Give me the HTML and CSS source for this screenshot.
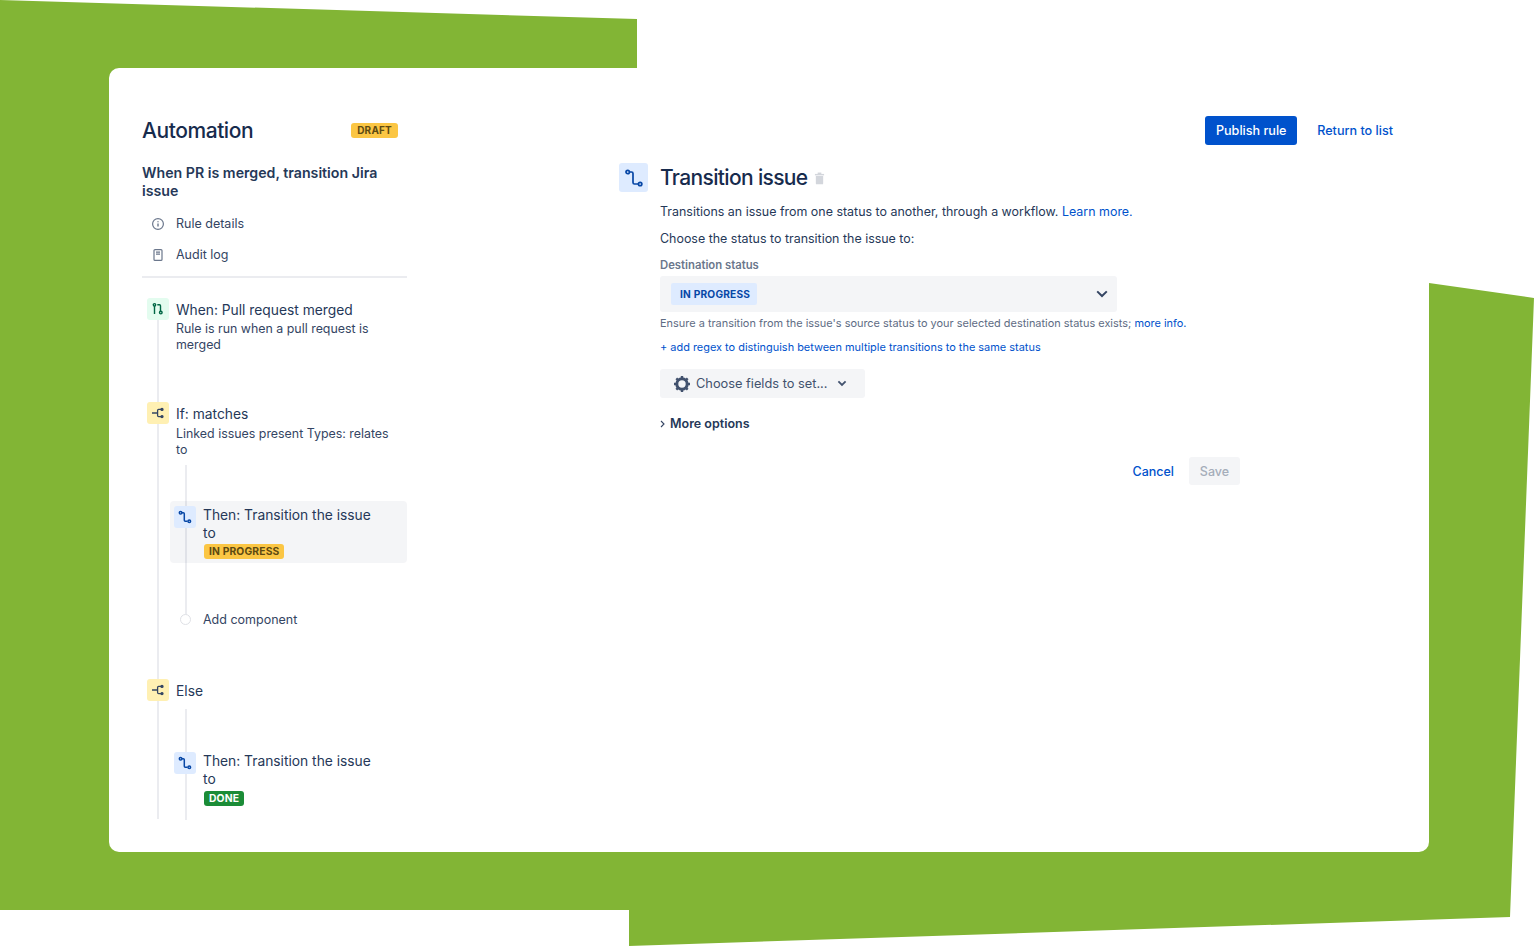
FILE: index.html
```html
<!DOCTYPE html>
<html lang="en">
<head>
  <meta charset="UTF-8">
  <title>Automation - Transition issue</title>
  <link rel="stylesheet" href="styles.css">
</head>
<body>

  <svg class="backdrop" width="1534" height="946" viewBox="0 0 1534 946">
    <polygon points="0,0 637,19 637,100 1429,100 1429,283 1534,298 1510,917 629,946 629,910 0,910" fill="#82b535"/>
  </svg>

  <div class="card">
    <aside class="sidebar">
      <div class="brand">
        <h1>Automation</h1>
        <span class="lozenge yellow draft">DRAFT</span>
      </div>
      <h2 class="rule-name">When PR is merged, transition Jira issue</h2>

      <div class="nav-item nav-first">
        <svg class="nav-icon" width="14" height="14" viewBox="0 0 14 14" fill="none" stroke="#6b778c" stroke-width="1.2">
          <circle cx="7" cy="7" r="5.4"/>
          <path d="M7 6.4v3.2M7 4.2v1" stroke-width="1.4"/>
        </svg>
        Rule details
      </div>
      <div class="nav-item">
        <svg class="nav-icon" width="14" height="14" viewBox="0 0 14 14" fill="none" stroke="#6b778c" stroke-width="1.2">
          <rect x="3" y="1.6" width="8" height="10.8" rx="1"/>
          <path d="M5 4.2h4M5 6.2h4"/>
        </svg>
        Audit log
      </div>
      <div class="divider"></div>

      <div class="tree">
        <div class="step">
          <span class="step-icon green">
            <svg width="14" height="14" viewBox="0 0 14 14" fill="none" stroke="#006644" stroke-width="1.4">
              <circle cx="3.5" cy="2.8" r="1.2"/>
              <path d="M3.5 4v8M6.3 2.8h2.2a1 1 0 0 1 1 1V9"/>
              <circle cx="9.8" cy="10.6" r="1.3"/>
            </svg>
          </span>
          <div class="step-text">
            <div class="step-title">When: Pull request merged</div>
            <div class="step-sub">Rule is run when a pull request is merged</div>
          </div>
        </div>

        <div class="step step-if">
          <span class="step-icon yellow-bg">
            <svg width="14" height="14" viewBox="0 0 14 14" fill="none" stroke="#344563" stroke-width="1.3">
              <path d="M1 7h5M10.5 3.4H7.6a1 1 0 0 0-1 1v5.2a1 1 0 0 0 1 1h2.9"/>
              <circle cx="11" cy="3.4" r="1" fill="#344563"/>
              <circle cx="11" cy="10.6" r="1" fill="#344563"/>
            </svg>
          </span>
          <div class="step-text">
            <div class="step-title">If: matches</div>
            <div class="step-sub">Linked issues present Types: relates to</div>
          </div>
        </div>

        <div class="branch branch-if">
          <div class="step inner selected">
            <span class="step-icon blue">
              <svg width="14" height="14" viewBox="0 0 14 14" fill="none" stroke="#0747a6" stroke-width="1.5">
                <circle cx="2.6" cy="2.8" r="1.3"/>
                <path d="M3.9 2.8h1.4a1 1 0 0 1 1 1v6.4a1 1 0 0 0 1 1h2.3"/>
                <circle cx="11.3" cy="11.2" r="1.3"/>
              </svg>
            </span>
            <div class="step-text">
              <div class="step-title">Then: Transition the issue to</div>
              <span class="lozenge yellow">IN PROGRESS</span>
            </div>
          </div>
          <div class="add-row">
            <span class="add-dot"></span>
            <span>Add component</span>
          </div>
        </div>

        <div class="step step-else">
          <span class="step-icon yellow-bg">
            <svg width="14" height="14" viewBox="0 0 14 14" fill="none" stroke="#344563" stroke-width="1.3">
              <path d="M1 7h5M10.5 3.4H7.6a1 1 0 0 0-1 1v5.2a1 1 0 0 0 1 1h2.9"/>
              <circle cx="11" cy="3.4" r="1" fill="#344563"/>
              <circle cx="11" cy="10.6" r="1" fill="#344563"/>
            </svg>
          </span>
          <div class="step-text">
            <div class="step-title">Else</div>
          </div>
        </div>

        <div class="branch branch-else">
          <div class="step inner">
            <span class="step-icon blue">
              <svg width="14" height="14" viewBox="0 0 14 14" fill="none" stroke="#0747a6" stroke-width="1.5">
                <circle cx="2.6" cy="2.8" r="1.3"/>
                <path d="M3.9 2.8h1.4a1 1 0 0 1 1 1v6.4a1 1 0 0 0 1 1h2.3"/>
                <circle cx="11.3" cy="11.2" r="1.3"/>
              </svg>
            </span>
            <div class="step-text">
              <div class="step-title">Then: Transition the issue to</div>
              <span class="lozenge green-solid">DONE</span>
            </div>
          </div>
        </div>
      </div>
    </aside>

    <main class="main">
      <div class="actions">
        <button class="btn-primary">Publish rule</button>
        <a class="return-link">Return to list</a>
      </div>

      <div class="panel">
        <div class="panel-head">
          <span class="panel-icon">
            <svg width="20" height="20" viewBox="0 0 14 14" fill="none" stroke="#0747a6" stroke-width="1.2">
              <circle cx="2.6" cy="2.8" r="1.2"/>
              <path d="M3.8 2.8h1.5a1 1 0 0 1 1 1v6.4a1 1 0 0 0 1 1h2.5"/>
              <circle cx="11.3" cy="11.2" r="1.2"/>
            </svg>
          </span>
          <h2>Transition issue</h2>
          <svg class="trash" width="11" height="13" viewBox="0 0 12 14" fill="#d3d6dc">
            <rect x="4" y="0.5" width="4" height="2"/>
            <rect x="1" y="2" width="10" height="1.6"/>
            <path d="M2 4.4h8v8a1 1 0 0 1-1 1H3a1 1 0 0 1-1-1z"/>
          </svg>
        </div>

        <div class="panel-body">
          <p class="lead lead-first">Transitions an issue from one status to another, through a workflow. <a>Learn more.</a></p>
          <p class="lead">Choose the status to transition the issue to:</p>
          <label class="field-label">Destination status</label>
          <div class="select">
            <span class="chip">IN PROGRESS</span>
            <svg width="12" height="8" viewBox="0 0 12 8" fill="none" stroke="#344563" stroke-width="2">
              <path d="M1.2 1.4L6 6l4.8-4.6"/>
            </svg>
          </div>
          <p class="helper">Ensure a transition from the issue's source status to your selected destination status exists; <a>more info.</a></p>
          <p class="helper regex"><a>+ add regex to distinguish between multiple transitions to the same status</a></p>

          <button class="btn-fields">
            <svg width="18" height="18" viewBox="0 0 18 18" fill="none" stroke="#42526e" stroke-width="3">
              <circle cx="9" cy="9" r="5.2"/>
              <path d="M9 1v2.4M9 14.6V17M1 9h2.4M14.6 9H17M3.3 3.3L5 5M13 13l1.7 1.7M3.3 14.7L5 13M13 5l1.7-1.7" stroke-width="2.4"/>
            </svg>
            <span>Choose fields to set...</span>
            <svg class="fields-caret" width="10" height="7" viewBox="0 0 10 7" fill="none" stroke="#42526e" stroke-width="1.8">
              <path d="M1.4 1.4L5 5l3.6-3.6"/>
            </svg>
          </button>

          <div class="more">
            <svg width="5" height="8" viewBox="0 0 5 8" fill="none" stroke="#344563" stroke-width="1.1">
              <path d="M1 1l3 3-3 3"/>
            </svg>
            <span>More options</span>
          </div>

          <div class="form-actions">
            <a class="cancel">Cancel</a>
            <button class="btn-save">Save</button>
          </div>
        </div>
      </div>
    </main>
  </div>

</body>
</html>
```

FILE: styles.css
```css
body {
  font-family: Inter, "Noto Sans", Arial, sans-serif;
  background: #fff;
  margin: 0;
  padding: 68px 0 0 109px;
  color: #253858;
}

a {
  color: #0052cc;
}

.backdrop {
  position: absolute;
  top: 0;
  left: 0;
}

.card {
  position: relative;
  box-sizing: border-box;
  width: 1320px;
  height: 784px;
  padding-left: 33px;
  background: #fff;
  border-radius: 10px;
  display: flex;
}

/* left column */
.sidebar {
  width: 265px;
  flex: none;
}

.brand {
  display: flex;
  align-items: center;
  justify-content: space-between;
  width: 256px;
  margin-top: 48px;
  height: 28px;
}

h1 {
  margin: 0;
  font-size: 21px;
  font-weight: 500;
  letter-spacing: -0.43px;
  color: #172b4d;
}

.rule-name {
  margin: 20px 0 0;
  font-size: 14.2px;
  line-height: 18px;
  font-weight: 600;
  color: #253858;
}

.nav-item {
  display: flex;
  align-items: center;
  gap: 11px;
  height: 31px;
  padding-left: 9px;
  font-size: 12.5px;
  color: #344563;
}

.nav-first {
  margin-top: 8px;
}

.divider {
  height: 2px;
  margin-top: 6px;
  background: #ebecf0;
}

.lozenge {
  display: inline-block;
  padding: 0 5px;
  height: 15px;
  line-height: 15px;
  border-radius: 3px;
  font-size: 10.3px;
  font-weight: 700;
  letter-spacing: 0.15px;
}

.yellow {
  background: #fbc644;
  color: #5e4a12;
}

.draft {
  padding: 0 6px;
  font-size: 10px;
  letter-spacing: 0.2px;
}

.green-solid {
  background: #1b8c37;
  color: #fff;
}

/* rule tree */
.tree {
  position: relative;
  padding-top: 20px;
}

.tree::before {
  content: "";
  position: absolute;
  left: 15px;
  top: 41px;
  height: 500px;
  width: 2px;
  background: #ebecf0;
}

.step {
  position: relative;
  display: flex;
  align-items: flex-start;
  gap: 7px;
  padding-left: 5px;
}

.step-if {
  margin-top: 49px;
}

.step-if .step-sub {
  margin-top: 3px;
}

.step-else {
  margin-top: 52px;
}

.step-icon {
  flex: none;
  width: 22px;
  height: 22px;
  border-radius: 3px;
  display: flex;
  align-items: center;
  justify-content: center;
}

.green { background: #e3fcef; }
.yellow-bg { background: #fff0b3; }
.blue { background: #deebff; }

.step-title {
  font-size: 13.8px;
  line-height: 18px;
  margin-top: 3px;
  color: #253858;
}

.step-sub {
  font-size: 12.4px;
  line-height: 16px;
  margin-top: 2px;
  padding-right: 15px;
  color: #344563;
}

.step-text {
  flex: 1;
  min-width: 0;
}

/* nested branches */
.branch {
  position: relative;
  padding-left: 28px;
}

.branch::before {
  content: "";
  position: absolute;
  left: 43px;
  width: 2px;
  background: #ebecf0;
}

.branch-if {
  padding-top: 43px;
}

.branch-if::before {
  top: 7px;
  height: 155px;
}

.branch-else {
  padding-top: 46px;
}

.branch-else::before {
  top: 8px;
  height: 111px;
}

.inner {
  padding: 5px 28px 4px 4px;
  border-radius: 4px;
}

.selected {
  background: rgba(9, 30, 66, 0.045);
}

.inner .step-title {
  margin-top: 0;
}

.inner .lozenge {
  display: block;
  width: fit-content;
  margin: 2px 0 0 1px;
}

.branch-else .lozenge {
  margin-top: 3px;
}

.add-row {
  position: relative;
  display: flex;
  align-items: center;
  gap: 12px;
  margin-top: 49px;
  padding-left: 10px;
  font-size: 12.5px;
  color: #344563;
}

.add-dot {
  width: 9px;
  height: 9px;
  border: 1px solid #dfe1e6;
  border-radius: 50%;
  background: #fff;
}

/* right column */
.main {
  margin-left: 212px;
  width: 774px;
}

.actions {
  display: flex;
  justify-content: flex-end;
  align-items: center;
  gap: 20px;
  margin-top: 48px;
}

.btn-primary {
  height: 29px;
  width: 92px;
  padding: 0;
  border: 0;
  border-radius: 3px;
  background: #0052cc;
  color: #fff;
  font: 500 12.6px Inter, sans-serif;
}

.return-link {
  font-size: 12.6px;
  font-weight: 500;
}

.panel-head {
  display: flex;
  align-items: center;
  margin-top: 18px;
}

.panel-icon {
  width: 29px;
  height: 29px;
  border-radius: 3px;
  background: #deebff;
  display: flex;
  align-items: center;
  justify-content: center;
  margin-right: 12px;
}

.panel-head h2 {
  margin: 0;
  font-size: 21px;
  font-weight: 500;
  letter-spacing: -0.65px;
  color: #172b4d;
}

.trash {
  margin-left: 6px;
  margin-top: 2px;
}

.panel-body {
  padding-left: 41px;
}

.lead {
  margin: 11px 0 0;
  font-size: 12.45px;
  line-height: 16px;
  color: #253858;
}

.lead-first {
  margin-top: 12px;
}

.field-label {
  display: block;
  margin-top: 11px;
  font-size: 11.3px;
  line-height: 14px;
  font-weight: 600;
  color: #6b778c;
}

.select {
  display: flex;
  align-items: center;
  justify-content: space-between;
  box-sizing: border-box;
  width: 457px;
  height: 36px;
  margin-top: 4px;
  padding: 0 9px 0 11px;
  background: #f4f5f7;
  border-radius: 3px;
}

.chip {
  height: 22px;
  line-height: 22px;
  padding: 0 7px 0 9px;
  background: #deebff;
  color: #0747a6;
  border-radius: 2px;
  font-size: 10.2px;
  font-weight: 700;
  letter-spacing: 0.2px;
}

.helper {
  margin: 4px 0 0;
  font-size: 10.95px;
  line-height: 14px;
  color: #5e6c84;
}

.helper.regex {
  margin-top: 10px;
}

.btn-fields {
  display: flex;
  align-items: center;
  gap: 5px;
  height: 29px;
  width: 205px;
  margin-top: 15px;
  padding: 0 0 0 13px;
  border: 0;
  border-radius: 3px;
  background: #f4f5f7;
  color: #42526e;
  font: 400 12.8px Inter, sans-serif;
}

.fields-caret {
  margin-left: 5px;
}

.more {
  display: flex;
  align-items: center;
  gap: 5px;
  margin-top: 18px;
  font-size: 12.5px;
  font-weight: 600;
  color: #253858;
}

.form-actions {
  display: flex;
  align-items: center;
  justify-content: flex-end;
  gap: 15px;
  width: 580px;
  margin-top: 26px;
}

.cancel {
  font-size: 12.5px;
  font-weight: 500;
}

.btn-save {
  width: 51px;
  height: 28px;
  padding: 0;
  border: 0;
  border-radius: 3px;
  background: #f4f5f7;
  color: #a5adba;
  font: 500 12.5px Inter, sans-serif;
}
```
